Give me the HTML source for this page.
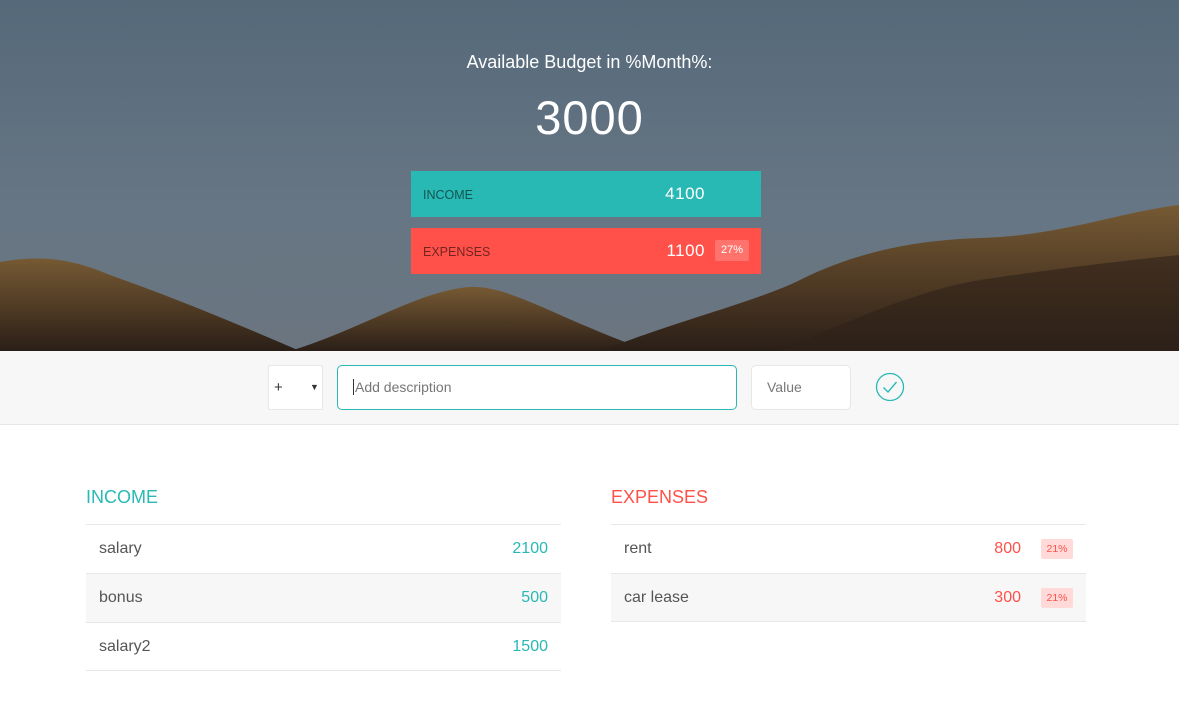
<!DOCTYPE html>
<html><head><meta charset="utf-8"><style>
*{margin:0;padding:0;box-sizing:border-box}
body{width:1179px;height:710px;overflow:hidden;background:#fff;font-family:"Liberation Sans",sans-serif;color:#555;position:relative}
.top{position:absolute;left:0;top:0;width:1179px;height:351px;background:linear-gradient(#55697a,#677684 60%,#6a7580);overflow:hidden}
.top svg{position:absolute;left:0;top:0}
.title{position:absolute;top:52px;width:100%;text-align:center;color:#fff;font-size:18px;font-weight:300}
.big{position:absolute;top:90px;width:100%;text-align:center;color:#fff;font-size:47px;font-weight:300;letter-spacing:1px}
.box{position:absolute;left:411px;width:350px;height:46px}
.box .l{position:absolute;left:12px;top:17px;font-size:12.5px;color:rgba(0,0,0,.55)}
.box .v{position:absolute;right:56px;top:13px;font-size:17px;color:#fff;letter-spacing:.5px}
.box .p{position:absolute;left:304px;top:12px;width:34px;height:21px;background:rgba(255,255,255,.2);color:#fff;font-size:11px;text-align:center;line-height:21px;border-radius:2px}
.bar{position:absolute;top:351px;left:0;width:1179px;height:74px;background:#f7f7f7;border-bottom:1px solid #e7e7e7}
.in{position:absolute;top:14px;height:45px;background:#fff;border:1px solid #e7e7e7;border-radius:5px;font-size:14px;color:#777;line-height:43px}
.col{position:absolute;top:487px;width:475px}
.col h2{font-weight:400;font-size:18px;height:37px}
.row{height:49px;border-top:1px solid #e7e7e7;position:relative;font-size:16px;line-height:48px;padding-left:13px}
.row .v{position:absolute;right:13px;top:0}
.e .row .v{right:65px;color:#ff5049}
.e .row .b{position:absolute;right:13px;top:14px;width:32px;height:20px;background:#ffdad9;color:#ff5049;font-size:10.5px;line-height:20px;text-align:center;border-radius:2px}
</style></head><body>
<div class="top">
<svg width="1179" height="351" viewBox="0 0 1179 351">
<defs><linearGradient id="h" x1="0" y1="0" x2="0" y2="1"><stop offset="0" stop-color="#765a34"/><stop offset=".6" stop-color="#4a3622"/><stop offset="1" stop-color="#2a1f18"/></linearGradient></defs>
<path d="M0 262 C40 255 70 258 110 275 C180 300 240 325 300 351 L0 351Z" fill="url(#h)"/>
<path d="M290 351 C360 330 420 290 470 287 C510 285 560 320 650 351Z" fill="url(#h)"/>
<path d="M600 351 C680 320 760 300 800 280 C860 250 920 240 980 238 C1060 236 1120 212 1179 205 L1179 351Z" fill="url(#h)"/>
<path d="M780 351 C850 320 920 290 980 280 C1060 268 1130 260 1179 255 L1179 351Z" fill="#2e2219" opacity=".6"/>
</svg>
<div class="title">Available Budget in %Month%:</div>
<div class="big">3000</div>
<div class="box" style="top:171px;background:#28b9b5"><span class="l">INCOME</span><span class="v">4100</span></div>
<div class="box" style="top:228px;background:#ff5049"><span class="l">EXPENSES</span><span class="v">1100</span><span class="p">27%</span></div>
</div>
<div class="bar">
<div class="in" style="left:268px;width:55px;padding-left:5px;color:#333;font-size:15px;border-radius:2px">+<span style="position:absolute;left:41px;font-size:9px">▼</span></div>
<div class="in" style="left:337px;width:400px;border-color:#28b9b5;padding-left:15px"><span style="border-left:1px solid #333;padding-left:1px">Add description</span></div>
<div class="in" style="left:751px;width:100px;padding-left:15px">Value</div>
<svg style="position:absolute;left:875px;top:21px" width="30" height="30" viewBox="0 0 30 30"><circle cx="15" cy="15" r="13.5" fill="none" stroke="#28b9b5" stroke-width="1.3"/><path d="M8.5 15.5 L13 20 L21.5 10" fill="none" stroke="#28b9b5" stroke-width="1.4"/></svg>
</div>
<div class="col" style="left:86px"><h2 style="color:#28b9b5">INCOME</h2>
<div class="row" style="background:#fff">salary<span class="v" style="color:#28b9b5">2100</span></div>
<div class="row" style="background:#f7f7f7">bonus<span class="v" style="color:#28b9b5">500</span></div>
<div class="row" style="background:#fff;border-bottom:1px solid #e7e7e7">salary2<span class="v" style="color:#28b9b5">1500</span></div>
</div>
<div class="col e" style="left:611px"><h2 style="color:#ff5049">EXPENSES</h2>
<div class="row" style="background:#fff">rent<span class="v">800</span><span class="b">21%</span></div>
<div class="row" style="background:#f7f7f7;border-bottom:1px solid #e7e7e7">car lease<span class="v">300</span><span class="b">21%</span></div>
</div>
</body></html>
